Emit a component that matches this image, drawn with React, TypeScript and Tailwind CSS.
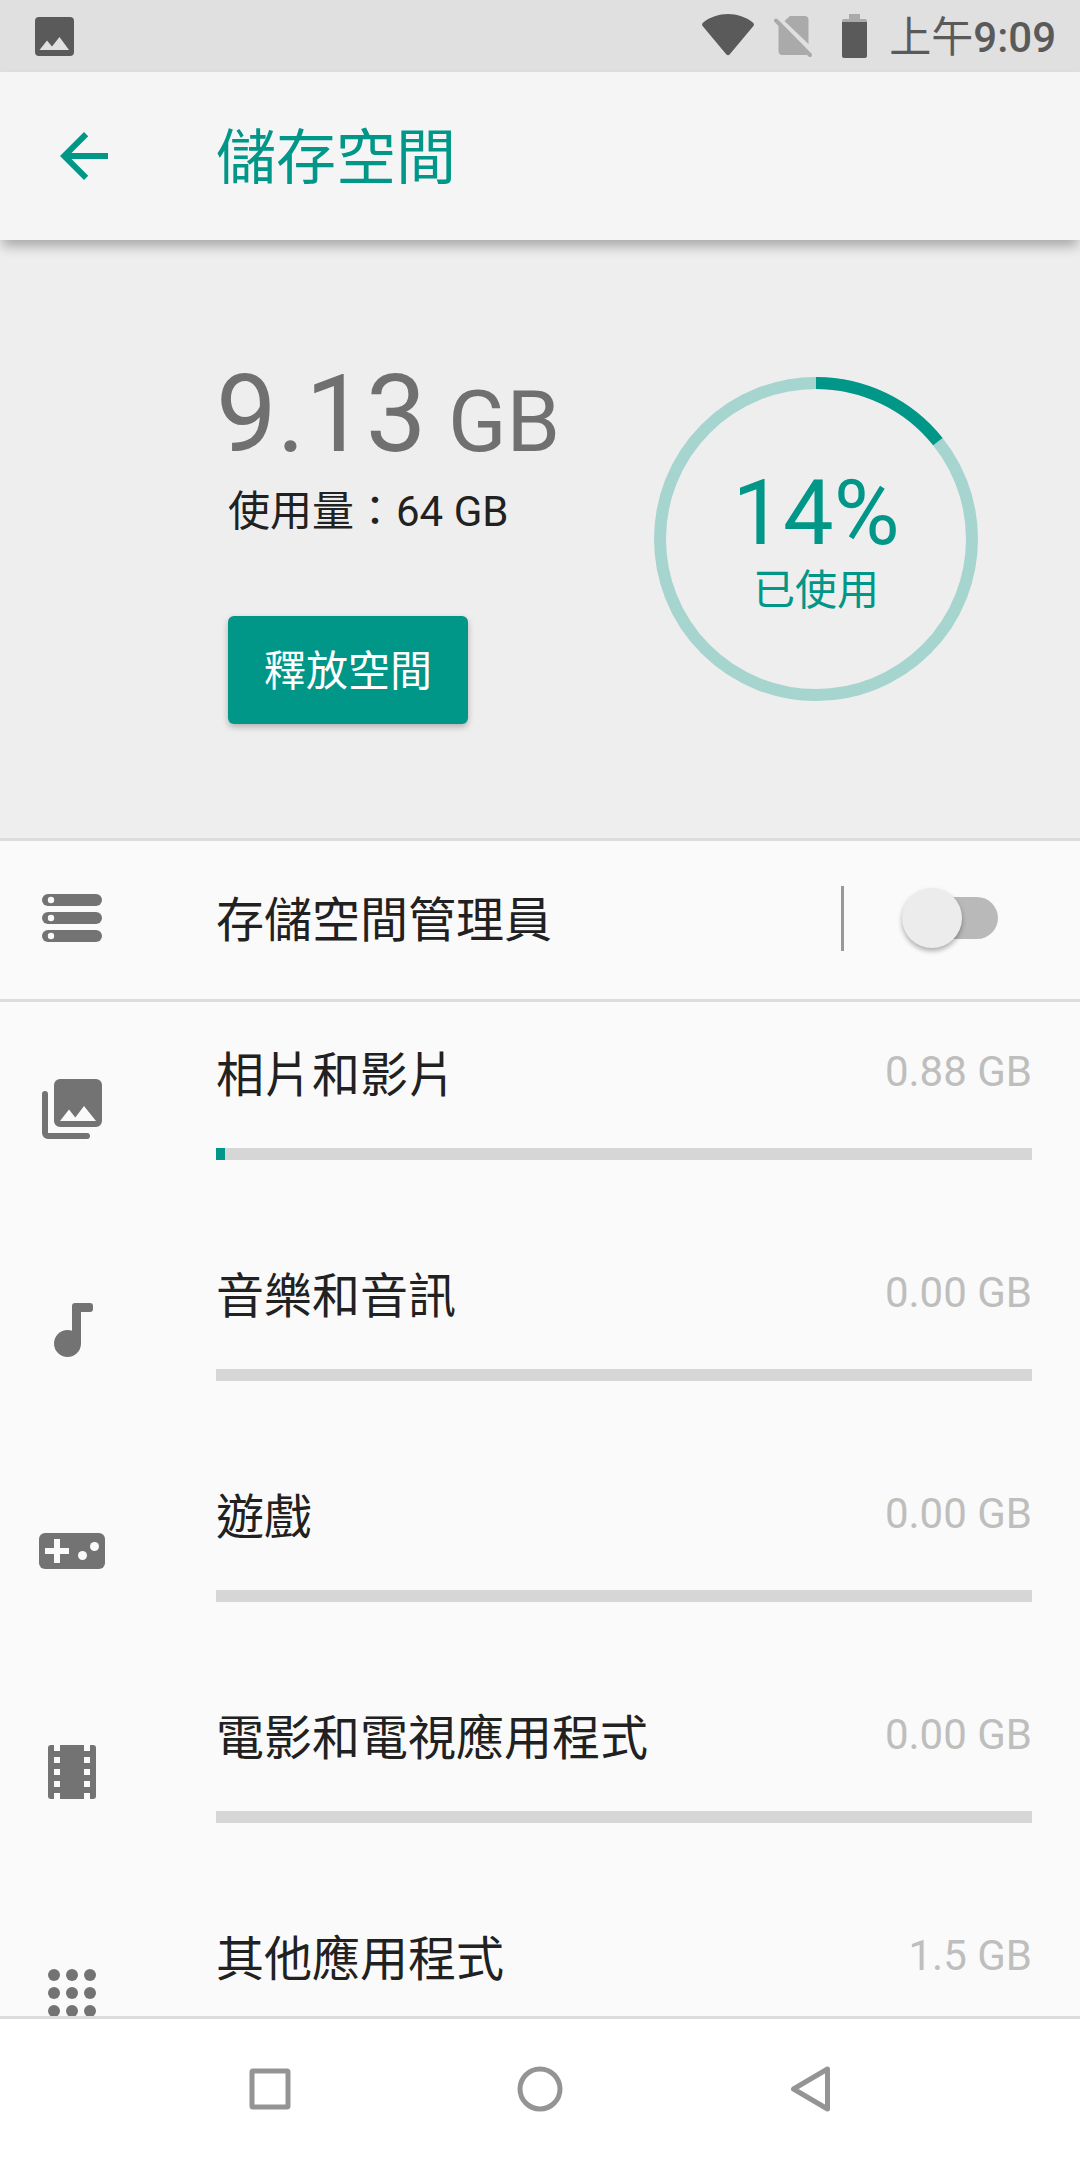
import { ReactNode, useState } from "react";

type Category = {
  name: string;
  size: string;
  percent: number;
  icon: ReactNode;
};

const PhotoIcon = () => (
  <svg viewBox="0 0 72 72" className="size-18 shrink-0" fill="currentColor" aria-hidden="true">
    <path fillRule="evenodd" d="M24 6h36a6 6 0 0 1 6 6v36a6 6 0 0 1-6 6H24a6 6 0 0 1-6-6V12a6 6 0 0 1 6-6ZM24 48h36L48 33 39.300 44.500 33 36.500Z" />
    <path d="M9 18a3 3 0 0 0-3 3v39a6 6 0 0 0 6 6h39a3 3 0 0 0 0-6H12V21a3 3 0 0 0-3-3Z" />
  </svg>
);

const MusicIcon = () => (
  <svg viewBox="0 0 72 72" className="size-18 shrink-0" fill="currentColor" aria-hidden="true">
    <circle cx="31.500" cy="49.500" r="13.500" />
    <path d="M39 9h15a3 3 0 0 1 3 3v3a3 3 0 0 1-3 3h-9v31.500h-9V12a3 3 0 0 1 3-3Z" />
  </svg>
);

const GameIcon = () => (
  <svg viewBox="0 0 72 72" className="size-18 shrink-0" aria-hidden="true">
    <rect x="3" y="18" width="66" height="36" rx="6" fill="currentColor" />
    <path d="M18 24h6v9h9v6h-9v9h-6v-9H9v-6h9Z" fill="#fafafa" />
    <circle cx="46.500" cy="40.500" r="4.500" fill="#fafafa" />
    <circle cx="58.500" cy="31.500" r="4.500" fill="#fafafa" />
  </svg>
);

const MovieIcon = () => (
  <svg viewBox="0 0 72 72" className="size-18 shrink-0" aria-hidden="true">
    <rect x="12" y="9" width="48" height="54" rx="3" fill="currentColor" />
    {[9, 21, 33, 45, 57].map((y) => (
      <path key={y} d={`M18 ${y}h6v6h-6zM48 ${y}h6v6h-6z`} fill="#fafafa" />
    ))}
  </svg>
);

const AppsIcon = () => (
  <svg viewBox="0 0 72 72" className="size-18 shrink-0" fill="currentColor" aria-hidden="true">
    {[18, 36, 54].map((y) => [18, 36, 54].map((x) => <circle key={`${x}-${y}`} cx={x} cy={y} r="6" />))}
  </svg>
);

const StorageIcon = () => (
  <svg viewBox="0 0 72 72" className="size-18 shrink-0" aria-hidden="true">
    {[12, 30, 48].map((y) => (
      <g key={y}>
        <rect x="6" y={y} width="60" height="12" rx="6" fill="currentColor" />
        <circle cx="15" cy={y + 6} r="3.200" fill="#fafafa" />
      </g>
    ))}
  </svg>
);

const categories: Category[] = [
  { name: "相片和影片", size: "0.88 GB", percent: 1.1, icon: <PhotoIcon /> },
  { name: "音樂和音訊", size: "0.00 GB", percent: 0, icon: <MusicIcon /> },
  { name: "遊戲", size: "0.00 GB", percent: 0, icon: <GameIcon /> },
  { name: "電影和電視應用程式", size: "0.00 GB", percent: 0, icon: <MovieIcon /> },
  { name: "其他應用程式", size: "1.5 GB", percent: 2, icon: <AppsIcon /> },
];

const StatusBar = () => (
  <div className="flex h-18 shrink-0 items-center justify-between bg-[#e0e0e0] pr-6 pl-[35px] text-[#5a5a5a]">
    <svg viewBox="0 0 39 39" className="size-[39px]" aria-hidden="true">
      <path fill="currentColor" fillRule="evenodd" d="M4 0h31a4 4 0 0 1 4 4v31a4 4 0 0 1-4 4H4a4 4 0 0 1-4-4V4a4 4 0 0 1 4-4ZM4.500 33h29.500L24.500 20 17 29.500 12 23.500Z" />
    </svg>
    <div className="flex items-center">
      <svg viewBox="0 0 52 44" className="mr-5 h-11 w-[52px]" fill="currentColor" aria-hidden="true">
        <path d="M1.200 8.500C8 3 17 0 26 0s18 3 24.800 8.500c1.300 1 1.500 2.200.6 3.400L27.800 40.300c-1 1.200-2.600 1.200-3.600 0L.6 11.900C-.3 10.700-.1 9.500 1.200 8.500Z" />
      </svg>
      <svg viewBox="0 0 38 44" className="mr-[30px] h-11 w-[38px] text-[#aaaaaa]" fill="currentColor" aria-hidden="true">
        <path d="M16 2h14.500a4 4 0 0 1 4 4v24L10.500 7ZM4.500 11 34 40.200a4 4 0 0 1-2 .8H8.500a4 4 0 0 1-4-4Z" />
        <path d="M2 6.500 36 41" stroke="currentColor" strokeWidth="4" strokeLinecap="round" />
      </svg>
      <svg viewBox="0 0 25 44" className="mr-[22px] h-11 w-[25px]" aria-hidden="true">
        <path d="M7 0h11v5h5a2 2 0 0 1 2 2v2H0V7a2 2 0 0 1 2-2h5Z" fill="#aaaaaa" />
        <path d="M0 8h25v34a2 2 0 0 1-2 2H2a2 2 0 0 1-2-2Z" fill="currentColor" />
      </svg>
      <span className="pt-1 text-[42px] leading-[56px]">
        上午<span className="font-medium">9:09</span>
      </span>
    </div>
  </div>
);

const UsageRing = ({ used, total }: { used: number; total: number }) => {
  const length = 2 * Math.PI * 156;
  const ratio = used / total;

  return (
    <div className="grid size-[324px] shrink-0 place-items-center text-[#009688]">
      <svg viewBox="0 0 324 324" className="col-start-1 row-start-1 size-full -rotate-90" fill="none" strokeWidth="12" aria-hidden="true">
        <circle cx="162" cy="162" r="156" stroke="#a6d4cf" />
        <circle cx="162" cy="162" r="156" stroke="currentColor" strokeDasharray={`${length * ratio} ${length}`} />
      </svg>
      <div className="col-start-1 row-start-1 flex flex-col items-center pt-2">
        <span className="text-[90px] leading-24">{Math.round(ratio * 100)}%</span>
        <span className="text-[42px] leading-[58px]">已使用</span>
      </div>
    </div>
  );
};

const CategoryRow = ({ category }: { category: Category }) => (
  <li className="flex pr-12 pl-9">
    <div className="w-45 shrink-0 pt-[71px] text-[#737373]">{category.icon}</div>
    <div className="flex-1 pt-11 pb-[63px]">
      <div className="flex items-start justify-between">
        <span className="text-[48px] leading-[60px] text-[#212121]">{category.name}</span>
        <span className="text-[42px] leading-[52px] text-[#bebebe]">{category.size}</span>
      </div>
      <div role="progressbar" aria-label={category.name} aria-valuenow={category.percent} className="mt-[42px] h-3 bg-[#d6d6d6]">
        <div className="h-full bg-[#009688]" style={{ width: `${category.percent}%` }} />
      </div>
    </div>
  </li>
);

const NavBar = () => (
  <nav className="flex h-36 shrink-0 border-t-3 border-[#dcdcdc] bg-white px-[12.5%] pb-0.5 text-[#949494]">
    <button aria-label="Recent" className="flex flex-1 items-center justify-center">
      <svg viewBox="0 0 48 48" className="size-12" fill="none" stroke="currentColor" strokeWidth="5">
        <rect x="6" y="6" width="36" height="36" rx="1" />
      </svg>
    </button>
    <button aria-label="Home" className="flex flex-1 items-center justify-center">
      <svg viewBox="0 0 48 48" className="size-12" fill="none" stroke="currentColor" strokeWidth="5">
        <circle cx="24" cy="24" r="20" />
      </svg>
    </button>
    <button aria-label="Back" className="flex flex-1 items-center justify-center">
      <svg viewBox="0 0 48 48" className="size-12" fill="none" stroke="currentColor" strokeWidth="5" strokeLinejoin="round">
        <path d="M41.500 4v40L7.500 24Z" />
      </svg>
    </button>
  </nav>
);

const App = () => {
  const [managerOn, setManagerOn] = useState(false);

  return (
    <div lang="zh-Hant" className="flex h-screen flex-col bg-[#fafafa] font-[Roboto,'Noto_Sans_CJK_TC',sans-serif]">
      <StatusBar />
      <header className="relative z-10 flex h-42 shrink-0 items-center bg-[#f5f5f5] pl-12 text-[#009688] shadow-[0_8px_12px_-2px_rgba(0,0,0,0.3)]">
        <button aria-label="返回" className="mr-24">
          <svg viewBox="0 0 24 24" className="size-18" fill="currentColor" aria-hidden="true">
            <path d="M20 11H7.830l5.590-5.590L12 4l-8 8 8 8 1.410-1.410L7.830 13H20v-2Z" />
          </svg>
        </button>
        <h1 className="pt-1.5 text-[60px] leading-18">儲存空間</h1>
      </header>

      <main className="flex min-h-0 flex-1 flex-col overflow-y-auto [scrollbar-width:none]">
        <section className="flex shrink-0 justify-between border-b-3 border-[#dcdcdc] bg-[#eeeeee] pr-[102px] pl-[216px]">
          <div className="pt-[114px] pb-[114px]">
            <p className="text-[108px] leading-[120px] text-[#707070]">
              9.13<span className="text-[86px] leading-none"> GB</span>
            </p>
            <p className="mt-[10px] ml-3 text-[42px] leading-[56px] text-[#212121]">使用量：64 GB</p>
            <button className="mt-[76px] ml-3 block h-27 w-60 rounded-md bg-[#009688] pt-0.5 text-[42px] text-white shadow-[0_3px_6px_rgba(0,0,0,0.25)]">
              釋放空間
            </button>
          </div>
          <div className="pt-[137px]">
            <UsageRing used={9.13} total={64} />
          </div>
        </section>

        {/* storage manager switch */}
        <section className="flex h-[161px] shrink-0 items-center border-b-3 border-[#dcdcdc] pr-[82px] pb-1 pl-9">
          <div className="w-45 text-[#737373]">
            <StorageIcon />
          </div>
          <label htmlFor="manager" className="flex-1 pt-1.5 text-[48px] leading-[60px] text-[#212121]">存儲空間管理員</label>
          <div className="mr-16 h-[65px] w-[3px] bg-[#999999]" />
          <input
            id="manager"
            type="checkbox"
            role="switch"
            checked={managerOn}
            onChange={(e) => setManagerOn(e.target.checked)}
            className="relative h-[42px] w-[90px] appearance-none rounded-full bg-[#b9b9b9] before:absolute before:-top-[9px] before:-left-[6px] before:size-15 before:rounded-full before:bg-[#ececec] before:shadow-[0_3px_5px_rgba(0,0,0,0.3)] checked:bg-[#80cbc4] checked:before:left-9 checked:before:bg-[#009688]"
          />
        </section>

        <ul>
          {categories.map((category) => (
            <CategoryRow key={category.name} category={category} />
          ))}
        </ul>
      </main>

      <NavBar />
    </div>
  );
};

export default App;
